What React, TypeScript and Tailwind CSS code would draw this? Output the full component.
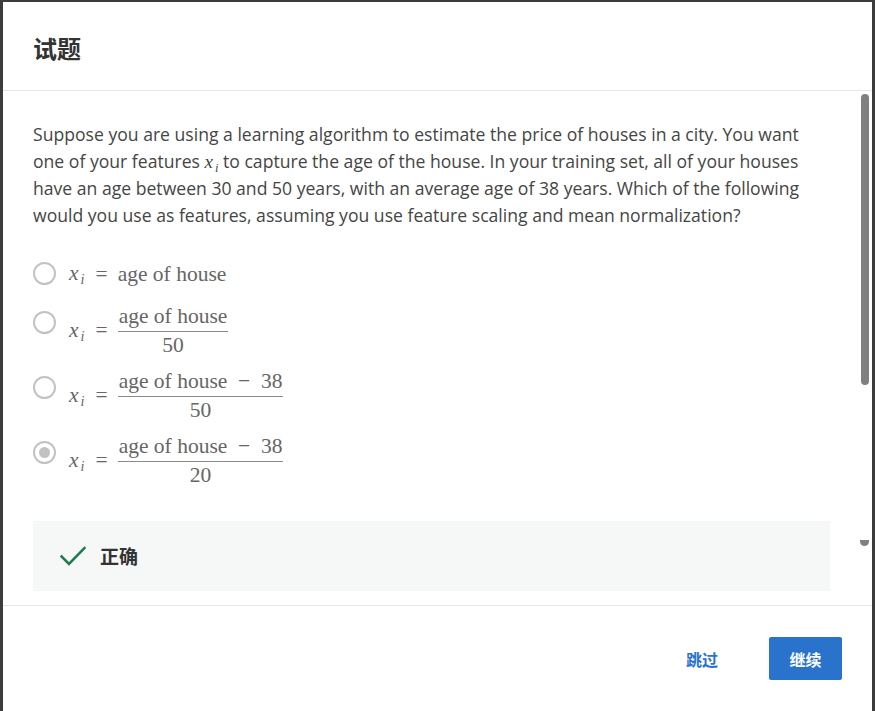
import React, { useState } from 'react';

const MATH = "font-['Liberation_Serif','DejaVu_Serif',serif]";

const Xi: React.FC<{ size?: string }> = ({ size = 'text-[21.5px]' }) => (
  <span className={`${MATH} ${size} italic whitespace-nowrap leading-none`}>
    x<span className="inline-block text-[0.66em] leading-none translate-y-[0.3em] ml-[2px]">i</span>
  </span>
);

const Fraction: React.FC<{ top: string; bottom: string }> = ({ top, bottom }) => (
  <span className="inline-flex flex-col items-stretch">
    <span className="px-[1px] leading-[30px] text-center whitespace-pre">{top}</span>
    <span className="h-px bg-[#8a8a8a]" />
    <span className="leading-[27px] text-center">{bottom}</span>
  </span>
);

interface Option {
  id: number;
  top: string;
  bottom?: string;
}

const options: Option[] = [
  { id: 0, top: 'age of house' },
  { id: 1, top: 'age of house', bottom: '50' },
  { id: 2, top: 'age of house  −  38', bottom: '50' },
  { id: 3, top: 'age of house  −  38', bottom: '20' },
];

const Radio: React.FC<{ checked: boolean }> = ({ checked }) => (
  <span className="w-[23px] h-[23px] shrink-0 rounded-full border-2 border-[#c2c2c2] flex items-center justify-center bg-white">
    {checked && <span className="w-[11px] h-[11px] rounded-full bg-[#c2c2c2]" />}
  </span>
);

export default function App() {
  const [selected, setSelected] = useState(3);

  return (
    <div className="w-[875px] h-[711px] bg-[#3c3c3c] pt-[2px] px-[3px] overflow-hidden font-['Open_Sans','Noto_Sans_CJK_SC',sans-serif]">
      <div className="bg-white h-full flex flex-col">
        <div className="h-[89px] shrink-0 px-[30px] flex items-center border-b border-[#e6e6e6]">
          <h2 className="text-[24px] font-bold text-[#333] font-['Noto_Sans_CJK_SC',sans-serif] mt-[3px]">试题</h2>
        </div>

        <div className="flex-1 relative overflow-hidden">
          <div className="pl-[30px] pr-[42px] pt-[30px]">
            <p className="text-[17.6px] leading-[27px] text-[#454545] max-w-[776px]">
              Suppose you are using a learning algorithm to estimate the price of houses in a city. You want one of your features <Xi size="text-[19px]" /> to capture the age of the house. In your training set, all of your houses have an age between 30 and 50 years, with an average age of 38 years. Which of the following would you use as features, assuming you use feature scaling and mean normalization?
            </p>

            <div className="mt-[29px] flex flex-col">
              {options.map((o) => (
                <label
                  key={o.id}
                  onClick={() => setSelected(o.id)}
                  className={`flex items-start gap-[13px] cursor-pointer ${o.bottom ? 'mb-[7px]' : 'mb-[11px]'}`}
                >
                  <span className={o.bottom ? 'mt-[10px]' : 'mt-[4px]'}>
                    <Radio checked={selected === o.id} />
                  </span>
                  <span className={`${MATH} text-[21.5px] text-[#666] flex items-center`}>
                    <Xi />
                    <span className="ml-[11px] mr-[10px]">=</span>
                    {o.bottom ? (
                      <Fraction top={o.top} bottom={o.bottom} />
                    ) : (
                      <span className="leading-[30px]">{o.top}</span>
                    )}
                  </span>
                </label>
              ))}
            </div>

            <div className="mt-[25px] h-[70px] bg-[#f5f8f7] flex items-center pl-[27px] gap-[14px]">
              <svg width="26" height="20" viewBox="0 0 26 20" fill="none">
                <path d="M1.5 10.5 L9 18 L24.5 2" stroke="#1e7b4d" strokeWidth="2.6" strokeLinecap="square" />
              </svg>
              <span className="text-[19px] font-bold text-[#333] font-['Noto_Sans_CJK_SC',sans-serif]">正确</span>
            </div>
          </div>

          <div className="absolute right-[3px] top-[3px] w-[8px] h-[291px] rounded-full bg-[#808080]" />
          <div className="absolute right-[3px] top-[449px] w-[9px] h-[6px] rounded-b-full bg-[#808080]" />
        </div>

        <div className="h-[106px] shrink-0 border-t border-[#e6e6e6] flex items-center justify-end pr-[30px] font-['Noto_Sans_CJK_SC',sans-serif]">
          <button className="text-[16px] font-bold text-[#2a73cc] mr-[51px]">跳过</button>
          <button className="w-[73px] h-[43px] rounded-[2px] bg-[#2a73cc] text-white text-[16px] font-bold">继续</button>
        </div>
      </div>
    </div>
  );
}
